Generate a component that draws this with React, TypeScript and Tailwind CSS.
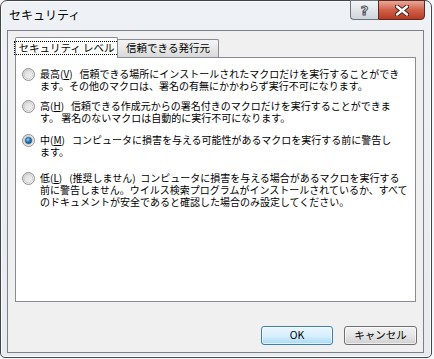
import React from 'react';

const jp = "font-['Noto_Sans_CJK_JP','Noto_Sans_CJK_SC',sans-serif]";

const Radio: React.FC<{ checked?: boolean }> = ({ checked }) => (
  <svg width="13" height="13" viewBox="0 0 13 13" className="shrink-0">
    <defs>
      <linearGradient id={checked ? 'rgOn' : 'rgOff'} x1="0" y1="0" x2="1" y2="1">
        <stop offset="0" stopColor="#d4d4d4" />
        <stop offset="1" stopColor="#fbfbfb" />
      </linearGradient>
      <radialGradient id="dot" cx="0.4" cy="0.35" r="0.7">
        <stop offset="0" stopColor="#8fd0f5" />
        <stop offset="0.5" stopColor="#2a7fc2" />
        <stop offset="1" stopColor="#0d3f72" />
      </radialGradient>
    </defs>
    <circle cx="6.5" cy="6.5" r="6" fill={`url(#${checked ? 'rgOn' : 'rgOff'})`} stroke="#8e8f8f" />
    <circle cx="6.5" cy="6.5" r="4.2" fill="none" stroke="#c9c9c9" strokeWidth="0.8" />
    {checked && <circle cx="6.5" cy="6.5" r="3.2" fill="url(#dot)" stroke="#1b4f80" strokeWidth="0.6" />}
  </svg>
);

type Item = { label: string; key: string; rest: string; lines: string[]; checked?: boolean; mt: string };

const ITEMS: Item[] = [
  {
    label: '最高',
    key: 'V',
    rest: '信頼できる場所にインストールされたマクロだけを実行することができ',
    lines: ['ます。その他のマクロは、署名の有無にかかわらず実行不可になります。'],
    mt: 'mt-[10px]',
  },
  {
    label: '高',
    key: 'H',
    rest: '信頼できる作成元からの署名付きのマクロだけを実行することができま',
    lines: ['す。 署名のないマクロは自動的に実行不可になります。'],
    mt: 'mt-[8px]',
  },
  {
    label: '中',
    key: 'M',
    rest: 'コンピュータに損害を与える可能性があるマクロを実行する前に警告し',
    lines: ['ます。'],
    checked: true,
    mt: 'mt-[10px]',
  },
  {
    label: '低',
    key: 'L',
    rest: '(推奨しません)  コンピュータに損害を与える場合があるマクロを実行する',
    lines: [
      '前に警告しません。ウイルス検索プログラムがインストールされているか、すべて',
      'のドキュメントが安全であると確認した場合のみ設定してください。',
    ],
    mt: 'mt-[14px]',
  },
];

const App: React.FC = () => {
  return (
    <div className={`w-[434px] h-[359px] bg-[#f6f7f9] overflow-hidden text-black ${jp}`}>
      {/* window frame */}
      <div className="w-[432px] h-[358px] flex flex-col border border-[#40464e] rounded-t-[7px] rounded-b-[5px] bg-gradient-to-b from-[#eef1f5] to-[#e7ebf0] shadow-[inset_0_0_0_1px_rgba(255,255,255,0.8)]">
        {/* title bar */}
        <div className="h-[29px] flex items-start">
          <div className="pl-[8px] pt-[6px] text-[12px] leading-[16px] flex-1">セキュリティ</div>
          <div className="flex mr-[6px] -mt-px">
            <div className="w-[28px] h-[20px] flex items-center justify-center border border-[#6d737b] border-r-0 rounded-bl-[4px] bg-gradient-to-b from-[#f3f5f7] via-[#e2e6ea] to-[#cfd5db]">
              <span className="text-[13px] font-bold leading-none text-[#f4f4f4] [-webkit-text-stroke:1px_#4b4f55] font-['DejaVu_Sans',sans-serif]">?</span>
            </div>
            <div className="w-[47px] h-[20px] flex items-center justify-center border border-[#5b2a24] rounded-br-[4px] bg-gradient-to-b from-[#e9a798] via-[#d0604b] to-[#b8391f]">
              <svg width="14" height="11" viewBox="0 0 14 11">
                <path d="M2 1.5 L12 9.5 M12 1.5 L2 9.5" stroke="#3b1a16" strokeWidth="4.2" strokeLinecap="round" />
                <path d="M2 1.5 L12 9.5 M12 1.5 L2 9.5" stroke="#ffffff" strokeWidth="2.4" strokeLinecap="round" />
              </svg>
            </div>
          </div>
        </div>

        {/* client area */}
        <div className="ml-[6px] w-[417px] h-[323px] border border-[#7c8189] bg-[#f0f0f0] flex flex-col px-[6px] pt-[6px]">
          {/* tabs */}
          <div className="flex items-end h-[20px] pl-px relative z-10">
            <div className="w-[103px] h-[21px] -mb-px bg-white border border-[#898c95] border-b-0 rounded-t-[2px] flex items-center justify-center">
              <div className="px-[3px] h-[14px] flex items-center border border-dotted border-black text-[10.5px] leading-none whitespace-nowrap">
                セキュリティ レベル
              </div>
            </div>
            <div className="w-[102px] h-[18px] -ml-px bg-gradient-to-b from-[#f4f4f4] via-[#e8e8e8] to-[#d8d8d8] border border-[#898c95] border-b-0 rounded-t-[2px] flex items-center justify-center text-[10.5px] leading-none whitespace-nowrap">
              信頼できる発行元
            </div>
          </div>

          {/* panel */}
          <div className="w-[401px] h-[245px] ml-px bg-white border border-[#898c95] flex flex-col pl-[6px]">
            {ITEMS.map((it) => (
              <div key={it.key} className={`flex ${it.mt}`}>
                <div className="h-[12px] flex items-center">
                  <Radio checked={it.checked} />
                </div>
                <div className="ml-[5px] text-[10px] leading-[12px] whitespace-pre">
                  <div>
                    {it.label}(<span className="underline">{it.key}</span>)
                    <span className="inline-block w-[7px]" />
                    {it.rest}
                  </div>
                  {it.lines.map((l) => (
                    <div key={l}>{l}</div>
                  ))}
                </div>
              </div>
            ))}
          </div>

          {/* buttons */}
          <div className="flex justify-end gap-[11px] mt-[24px]">
            <button className="w-[72px] h-[19px] border border-[#3c7fb1] rounded-[3px] bg-gradient-to-b from-[#eaf6fd] via-[#d9f0fc] to-[#a7d9f5] text-[10.5px] leading-none shadow-[inset_0_0_0_1px_rgba(255,255,255,0.6)]">
              OK
            </button>
            <button className="w-[73px] h-[19px] border border-[#707070] rounded-[3px] bg-gradient-to-b from-[#f2f2f2] via-[#e6e6e6] to-[#d0d0d0] text-[10.5px] leading-none shadow-[inset_0_0_0_1px_rgba(255,255,255,0.6)]">
              キャンセル
            </button>
          </div>
        </div>
      </div>
    </div>
  );
};

export default App;
